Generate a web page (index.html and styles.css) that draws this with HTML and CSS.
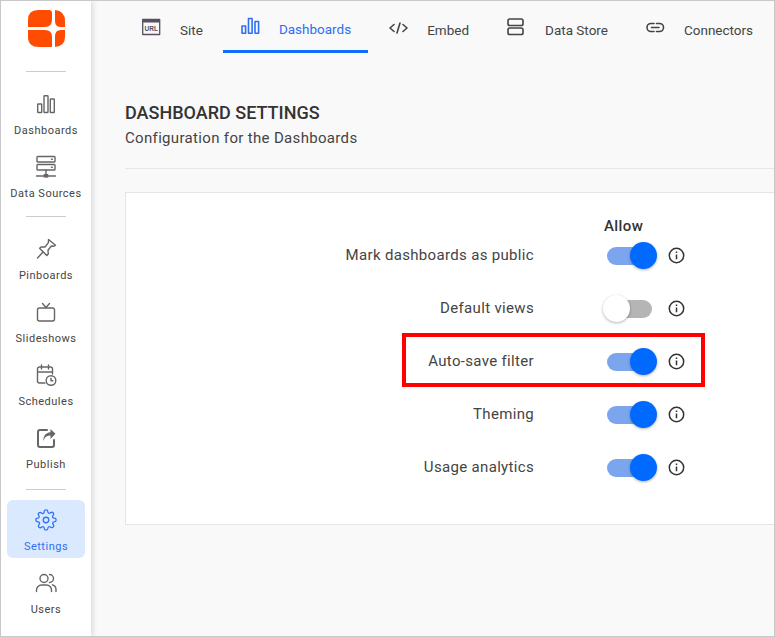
FILE: index.html
```html
<!DOCTYPE html>
<html lang="en">
<head>
    <meta charset="UTF-8">
    <meta name="viewport" content="width=device-width, initial-scale=1.0">
    <title>Dashboard Settings</title>
    <link rel="stylesheet" href="styles.css">
</head>
<body>
    <div class="frame">
        <aside class="sidebar">
            <svg class="logo" viewBox="0 0 37 38" width="37" height="38">
                <path d="M10 0H21Q24 0 24 3V10Q24 17 17 17H0V10Q0 0 10 0Z"/>
                <path d="M27 0Q37 1 37 11V17H33Q27 17 27 11Z"/>
                <path d="M0 20H17Q24 20 24 27V37H11Q0 37 0 27Z"/>
                <path d="M33 20H37V27Q37 36 27 37V26Q27 20 33 20Z"/>
            </svg>
            <div class="side-divider first"></div>
            <nav class="side-group">
                <a class="side-item">
                    <svg class="side-icon" viewBox="0 0 24 24"><rect x="3.7" y="12" width="4" height="8.5" rx=".6"/><rect x="10" y="3.7" width="4" height="16.8" rx=".6"/><rect x="16.3" y="7" width="4" height="13.5" rx=".6"/></svg>
                    <span>Dashboards</span>
                </a>
                <a class="side-item">
                    <svg class="side-icon" viewBox="0 0 24 24"><rect x="3" y="1.5" width="18" height="5.5" rx=".8"/><rect x="3" y="9.5" width="18" height="5.5" rx=".8"/><path d="M12 15v4M2.5 21H9.5M14.5 21H21.5M17.5 4.2h.8M17.5 12.2h.8"/><rect x="9.7" y="19" width="4.6" height="3.6" fill="#666" stroke="none"/></svg>
                    <span>Data Sources</span>
                </a>
            </nav>
            <div class="side-divider"></div>
            <nav class="side-group">
                <a class="side-item">
                    <svg class="side-icon" viewBox="0 0 24 24"><path d="M14.5 2.5L21.5 8.2L19.6 9.3L17.3 9L14 13.3L14.3 17L12.8 18.6L5.6 11.3L7.3 9.9L11 10L14.4 5.6L14.5 2.5Z"/><path d="M9 15L3.5 21"/></svg>
                    <span>Pinboards</span>
                </a>
                <a class="side-item">
                    <svg class="side-icon" viewBox="0 0 24 24"><rect x="3.5" y="8" width="17" height="13" rx="2"/><path d="M8.5 3.5L12 7.5L15.5 3.5"/></svg>
                    <span>Slideshows</span>
                </a>
                <a class="side-item">
                    <svg class="side-icon" viewBox="0 0 24 24"><path d="M11 20H5.5a2 2 0 0 1-2-2V6a2 2 0 0 1 2-2h11a2 2 0 0 1 2 2v5M3.5 9h15M7.5 2v4M14.5 2v4"/><circle cx="17" cy="17.5" r="4.8"/><path d="M17 15.3v2.4h1.8"/></svg>
                    <span>Schedules</span>
                </a>
                <a class="side-item">
                    <svg class="side-icon thick" viewBox="0 0 24 24"><path d="M13 4H6a2 2 0 0 0-2 2v13a2 2 0 0 0 2 2h12a2 2 0 0 0 2-2v-5"/><path d="M9.5 15.5c.6-4 3.2-6 7-6V13l5-5.2L16.5 3v3.2c-5 .4-7.5 4-7 9.3Z" fill="#666" stroke="none"/></svg>
                    <span>Publish</span>
                </a>
            </nav>
            <div class="side-divider last"></div>
            <nav class="side-group">
                <a class="side-item active">
                    <svg class="side-icon" viewBox="-1 -1 26 26"><circle cx="12" cy="12" r="3"/><path d="M19.4 15a1.65 1.65 0 0 0 .33 1.82l.06.06a2 2 0 1 1-2.83 2.83l-.06-.06a1.65 1.65 0 0 0-2.82 1.17V21a2 2 0 1 1-4 0v-.09A1.65 1.65 0 0 0 7.27 19.74l-.06.06a2 2 0 1 1-2.83-2.83l.06-.06A1.65 1.65 0 0 0 3.26 14H3a2 2 0 1 1 0-4h.09A1.65 1.65 0 0 0 4.26 7.27l-.06-.06a2 2 0 1 1 2.83-2.83l.06.06A1.65 1.65 0 0 0 10 3.26V3a2 2 0 1 1 4 0v.09a1.65 1.65 0 0 0 2.82 1.17l.06-.06a2 2 0 1 1 2.83 2.83l-.06.06A1.65 1.65 0 0 0 20.74 10H21a2 2 0 1 1 0 4h-.09a1.65 1.65 0 0 0-1.51 1Z"/></svg>
                    <span>Settings</span>
                </a>
                <a class="side-item">
                    <svg class="side-icon" viewBox="0 0 24 24"><circle cx="10" cy="7.5" r="4"/><path d="M2.5 20.5v-1.500a5 5 0 0 1 5-5h5a5 5 0 0 1 5 5v1.500M15.500 3.500a4 4 0 0 1 0 8M18.500 13.800a5 5 0 0 1 3.500 5v1.700"/></svg>
                    <span>Users</span>
                </a>
            </nav>
        </aside>

        <main class="content">
            <div class="tabs">
                <a class="tab">
                    <svg class="tab-icon" viewBox="0 0 20 20"><rect class="url-frame" x="0.7" y="1.5" width="17" height="15"/><rect class="url-bar" x="0.7" y="1.5" width="17" height="3"/><text x="9.2" y="13" class="url-text">URL</text></svg>
                    <span>Site</span>
                </a>
                <a class="tab active">
                    <svg class="tab-icon" viewBox="0 0 20 20"><rect x="1" y="9" width="3.6" height="7.3"/><rect x="7.5" y="1.5" width="3.6" height="14.8"/><rect x="14" y="4.5" width="3.6" height="11.8"/></svg>
                    <span>Dashboards</span>
                </a>
                <a class="tab">
                    <svg class="tab-icon" viewBox="0 0 20 20"><path d="M5 6.500L1 10L5 13.500M14 6.500L18 10L14 13.500M11 5L8 15"/></svg>
                    <span>Embed</span>
                </a>
                <a class="tab">
                    <svg class="tab-icon" viewBox="0 0 20 20"><rect x="1" y="1" width="15" height="6.5" rx="1.8"/><rect x="1" y="10" width="15" height="6.5" rx="1.8"/></svg>
                    <span>Data Store</span>
                </a>
                <a class="tab">
                    <svg class="tab-icon" viewBox="0 0 20 20"><path d="M8 5.5H5a4 4 0 0 0 0 8h3M10.500 5.500H13.500a4 4 0 0 1 0 8h-3M5.500 9.500h7.500"/></svg>
                    <span>Connectors</span>
                </a>
            </div>

            <header class="page-head">
                <h1>DASHBOARD SETTINGS</h1>
                <p>Configuration for the Dashboards</p>
            </header>

            <section class="card">
                <div class="allow-head">Allow</div>
                <div class="rows">
                    <div class="row">
                        <span class="row-label">Mark dashboards as public</span>
                        <span class="toggle on"></span>
                        <svg class="info" viewBox="0 0 17 17"><circle cx="8.5" cy="8.5" r="7.2"/><path d="M8.5 7.5v4.8M8.5 4.5v1.6"/></svg>
                    </div>
                    <div class="row">
                        <span class="row-label">Default views</span>
                        <span class="toggle"></span>
                        <svg class="info" viewBox="0 0 17 17"><circle cx="8.5" cy="8.5" r="7.2"/><path d="M8.5 7.5v4.8M8.5 4.5v1.6"/></svg>
                    </div>
                    <div class="row">
                        <span class="row-label">Auto-save filter</span>
                        <span class="toggle on"></span>
                        <svg class="info" viewBox="0 0 17 17"><circle cx="8.5" cy="8.5" r="7.2"/><path d="M8.5 7.5v4.8M8.5 4.5v1.6"/></svg>
                        <div class="highlight"></div>
                    </div>
                    <div class="row">
                        <span class="row-label">Theming</span>
                        <span class="toggle on"></span>
                        <svg class="info" viewBox="0 0 17 17"><circle cx="8.5" cy="8.5" r="7.2"/><path d="M8.5 7.5v4.8M8.5 4.5v1.6"/></svg>
                    </div>
                    <div class="row">
                        <span class="row-label">Usage analytics</span>
                        <span class="toggle on"></span>
                        <svg class="info" viewBox="0 0 17 17"><circle cx="8.5" cy="8.5" r="7.2"/><path d="M8.5 7.5v4.8M8.5 4.5v1.6"/></svg>
                    </div>
                </div>
            </section>
        </main>
    </div>
</body>
</html>
```

FILE: styles.css
```css
* {
    box-sizing: border-box;
}

body {
    margin: 0;
    overflow: hidden;
    font-family: Roboto, "Liberation Sans", sans-serif;
    color: #444;
}

.frame {
    display: flex;
    width: 775px;
    height: 637px;
    border: 1px solid #c8c8c8;
    background-color: #f9f9f9;
    overflow: hidden;
}

/* left navigation */
.sidebar {
    flex: none;
    display: flex;
    flex-direction: column;
    width: 90px;
    padding: 9px 6px 0;
    background-color: #fff;
    box-shadow: 2px 0 5px rgba(0, 0, 0, 0.12);
    position: relative;
}

.logo {
    align-self: center;
    flex: none;
    fill: #ff4c00;
}

.side-divider {
    flex: none;
    align-self: center;
    width: 40px;
    height: 1px;
    margin: 11px 0 12px;
    background-color: #ccc;
}

.side-divider.first {
    margin: 23px 0 12px;
}

.side-divider.last {
    margin: 13px 0 10px;
}

.side-group {
    display: flex;
    flex-direction: column;
    gap: 5px;
}

.side-item {
    display: flex;
    flex-direction: column;
    align-items: center;
    height: 58px;
    padding-top: 8px;
    border-radius: 6px;
    font-size: 11px;
    line-height: 14px;
    letter-spacing: 0.5px;
    white-space: nowrap;
    color: #444;
}

.side-icon {
    flex: none;
    width: 24px;
    height: 24px;
    margin-bottom: 8px;
    fill: none;
    stroke: #666;
    stroke-width: 1.4;
    stroke-linecap: round;
    stroke-linejoin: round;
}

.side-icon.thick {
    stroke-width: 2;
}

.side-item.active {
    background-color: #dbe9ff;
    color: #2f6ff0;
}

.side-item.active .side-icon {
    stroke: #2f74f5;
}

/* main area */
.content {
    flex: 1;
    min-width: 0;
    overflow: hidden;
}

.tabs {
    display: flex;
    gap: 3px;
    height: 52px;
    margin-left: 33px;
}

.tab {
    display: flex;
    align-items: center;
    gap: 18px;
    padding: 6px 17px 0 18px;
    font-size: 13.5px;
    white-space: nowrap;
    color: #444;
}

.tab.active {
    border-bottom: 3px solid #0d6efd;
    color: #2f6ff0;
}

.tab-icon {
    flex: none;
    width: 20px;
    height: 20px;
    margin-top: -4px;
    fill: none;
    stroke: #444;
    stroke-width: 1.6;
    stroke-linecap: round;
    stroke-linejoin: round;
}

.tab.active .tab-icon {
    stroke: #2f6ff0;
}

.url-frame {
    stroke: #5a5060;
    stroke-width: 1.3;
}

.url-bar {
    fill: #5a5060;
    stroke: none;
}

.url-text {
    font-family: "Liberation Sans", sans-serif;
    font-size: 6.5px;
    font-weight: bold;
    text-anchor: middle;
    fill: #5a5060;
    stroke: none;
}

.page-head {
    margin-left: 34px;
    padding: 50px 0 20px;
    border-bottom: 1px solid #e6e6e6;
}

.page-head h1 {
    margin: 0 0 5px;
    font-size: 18px;
    line-height: 20px;
    font-weight: 500;
    color: #333;
}

.page-head p {
    margin: 0;
    font-size: 15px;
    line-height: 20px;
    letter-spacing: 0.33px;
    color: #444;
}

.card {
    width: 680px;
    height: 333px;
    margin: 23px 0 0 34px;
    padding-top: 23px;
    border: 1px solid #e5e5e5;
    background-color: #fff;
}

.allow-head {
    margin-left: 478px;
    font-size: 15px;
    line-height: 20px;
    font-weight: 500;
    letter-spacing: 0.4px;
    color: #333;
}

.rows {
    display: flex;
    flex-direction: column;
    gap: 17px;
    margin-top: 1px;
}

.row {
    position: relative;
    display: flex;
    align-items: center;
    height: 36px;
}

.row-label {
    flex: none;
    width: 408px;
    margin-right: 69px;
    font-size: 15px;
    letter-spacing: 0.33px;
    text-align: right;
    color: #444;
}

.toggle {
    flex: none;
    position: relative;
    width: 54px;
    height: 27px;
    margin-right: 11px;
}

.toggle::before {
    content: "";
    position: absolute;
    top: 5px;
    left: 4px;
    width: 45px;
    height: 18px;
    border-radius: 9px;
    background-color: #b5b5b5;
}

.toggle::after {
    content: "";
    position: absolute;
    top: 0;
    left: 0;
    width: 27px;
    height: 27px;
    border-radius: 50%;
    background-color: #fff;
    box-shadow: 0 1px 3px rgba(0, 0, 0, 0.3);
}

.toggle.on::before {
    background-color: #7ba6ee;
}

.toggle.on::after {
    left: 27px;
    background-color: #0069ff;
}

.info {
    flex: none;
    width: 17px;
    height: 17px;
    fill: none;
    stroke: #333;
    stroke-width: 1.5;
}

/* red annotation box over the auto-save row */
.highlight {
    position: absolute;
    top: -10px;
    left: 276px;
    width: 303px;
    height: 54px;
    border: 4px solid #f00;
}
```
